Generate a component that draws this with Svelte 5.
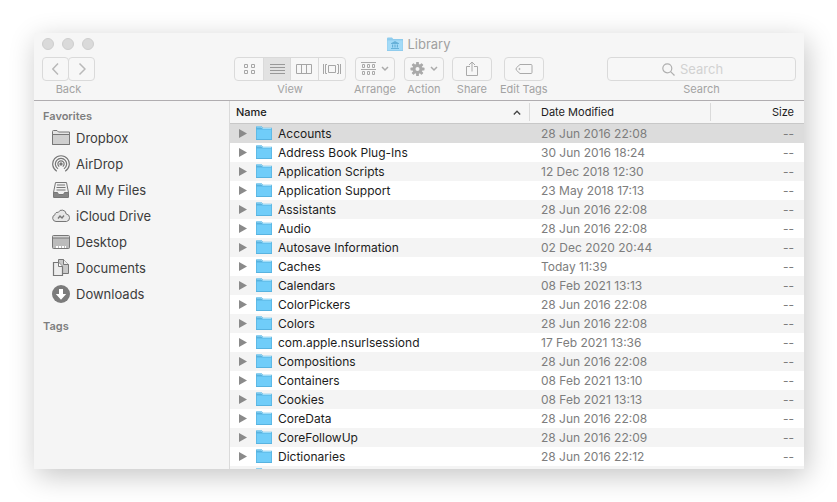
<script>
  const favorites = [
    { label: 'Dropbox', icon: 'folder' },
    { label: 'AirDrop', icon: 'airdrop' },
    { label: 'All My Files', icon: 'files' },
    { label: 'iCloud Drive', icon: 'cloud' },
    { label: 'Desktop', icon: 'desktop' },
    { label: 'Documents', icon: 'documents' },
    { label: 'Downloads', icon: 'downloads' },
  ];

  const rows = [
    ['Accounts', '28 Jun 2016 22:08'],
    ['Address Book Plug-Ins', '30 Jun 2016 18:24'],
    ['Application Scripts', '12 Dec 2018 12:30'],
    ['Application Support', '23 May 2018 17:13'],
    ['Assistants', '28 Jun 2016 22:08'],
    ['Audio', '28 Jun 2016 22:08'],
    ['Autosave Information', '02 Dec 2020 20:44'],
    ['Caches', 'Today 11:39'],
    ['Calendars', '08 Feb 2021 13:13'],
    ['ColorPickers', '28 Jun 2016 22:08'],
    ['Colors', '28 Jun 2016 22:08'],
    ['com.apple.nsurlsessiond', '17 Feb 2021 13:36'],
    ['Compositions', '28 Jun 2016 22:08'],
    ['Containers', '08 Feb 2021 13:10'],
    ['Cookies', '08 Feb 2021 13:13'],
    ['CoreData', '28 Jun 2016 22:08'],
    ['CoreFollowUp', '28 Jun 2016 22:09'],
    ['Dictionaries', '28 Jun 2016 22:12'],
    ['', ''],
  ];

  const views = ['icons', 'list', 'columns', 'cover'];
  const viewNames = { icons: 'Icon view', list: 'List view', columns: 'Column view', cover: 'Cover Flow view' };

  let view = $state('list');
  let selected = $state(0);
</script>

{#snippet chevron()}
  <svg width="8" height="6" viewBox="0 0 8 6" fill="none" stroke="#ababab" stroke-width="1.5"><path d="M1 1l3 3 3-3" /></svg>
{/snippet}

<div class="desktop">
  <div class="window">
    <header>
      <div class="titlebar">
        <div class="lights">
          <button aria-label="Close"></button>
          <button aria-label="Minimize"></button>
          <button aria-label="Zoom"></button>
        </div>
        <div class="title">
          <svg width="16" height="14" viewBox="0 0 16 14">
            <path d="M0 1.500Q0 .5 1 .5h4l1.300 1.500H16V14H0z" fill="#90cdee" />
            <path d="M0 3h16v10.500H0z" fill="#a3dbf8" stroke="#8cc9e9" stroke-width=".7" />
            <path d="M8 4l4 2.200v.8H4v-.8zM5 7.500h1.200v3H5zM7.400 7.500h1.200v3H7.400zM9.800 7.500H11v3H9.800zM4 11h8v1H4z" fill="#66b1d9" />
          </svg>
          <span>Library</span>
        </div>
      </div>

      <div class="toolbar">
        <div class="tool nav">
          <div class="pair">
            <button aria-label="Back">
              <svg width="8" height="14" viewBox="0 0 8 14" fill="none" stroke="#b9b9b9" stroke-width="1.500"><path d="M6 1.500L.8 7 6 12.500" /></svg>
            </button>
            <button aria-label="Forward">
              <svg width="8" height="14" viewBox="0 0 8 14" fill="none" stroke="#b9b9b9" stroke-width="1.500"><path d="M1.500 1.500L7 7 1.500 12.500" /></svg>
            </button>
          </div>
          <span>Back</span>
        </div>

        <div class="tool">
          <div class="segments">
            {#each views as v}
              <button aria-label={viewNames[v]} aria-pressed={view === v} class:on={view === v} onclick={() => (view = v)}>
                <svg width="18" height="12" viewBox="0 0 18 12" fill="none" stroke="#a6a6a6" stroke-width="1">
                  {#if v === 'icons'}
                    <path d="M4.500 1.500h3v3h-3zM11.500 1.500h3v3h-3zM4.500 7.500h3v3h-3zM11.500 7.500h3v3h-3z" />
                  {:else if v === 'list'}
                    <path d="M2 1.500h15M2 4.500h15M2 7.500h15M2 10.500h15" stroke="#999" />
                  {:else if v === 'columns'}
                    <path d="M1.500 1.500h15v9h-15zM6.500 1.500v9M11.500 1.500v9" />
                  {:else}
                    <path d="M5.500 2.500h7v7h-7zM.5 1v10M17.500 1v10M4 1.500H2.500v9H4M14 1.500h1.500v9H14" />
                  {/if}
                </svg>
              </button>
            {/each}
          </div>
          <span>View</span>
        </div>

        <div class="tool">
          <button class="box" aria-label="Arrange">
            <svg width="15" height="14" viewBox="0 0 15 14" fill="none" stroke="#aaa">
              <path d="M0 .5h15M0 7.500h15M1.500 2.500h2v3h-2zM6.500 2.500h2v3h-2zM11.500 2.500h2v3h-2zM1.500 9.500h2v3h-2zM6.500 9.500h2v3h-2zM11.500 9.500h2v3h-2z" />
            </svg>
            {@render chevron()}
          </button>
          <span>Arrange</span>
        </div>

        <div class="tool">
          <button class="box" aria-label="Action">
            <svg width="15" height="14" viewBox="-7.500 -7 15 14">
              {#each [0, 45, 90, 135] as a}
                <rect x="-1.400" y="-7" width="2.800" height="14" rx=".6" fill="#aaa" transform="rotate({a})" />
              {/each}
              <circle r="5" fill="#aaa" />
              <circle r="2" fill="#f6f6f6" />
            </svg>
            {@render chevron()}
          </button>
          <span>Action</span>
        </div>

        <div class="tool">
          <button class="box" aria-label="Share">
            <svg width="12" height="16" viewBox="0 0 12 16" fill="none" stroke="#aaa">
              <path d="M4 5.500H.5v9h11v-9H8M6 10.500V1M3 4l3-3 3 3" />
            </svg>
          </button>
          <span>Share</span>
        </div>

        <div class="tool">
          <button class="box" aria-label="Edit Tags">
            <svg width="18" height="12" viewBox="0 0 18 12" fill="none" stroke="#aaa">
              <path d="M5 1.500h11q1 0 1 1v7q0 1-1 1H5L1.500 7.300Q.5 6 1.500 4.700z" /><circle cx="4.500" cy="6" r=".6" />
            </svg>
          </button>
          <span>Edit Tags</span>
        </div>

        <div class="tool search">
          <div class="field">
            <svg width="13" height="13" viewBox="0 0 13 13" fill="none" stroke="#b0b0b0" stroke-width="1.200"><circle cx="5.300" cy="5.300" r="4.500" /><path d="M8.600 8.600L12.500 12.500" /></svg>
            <input id="search" type="text" placeholder="Search" />
          </div>
          <label for="search">Search</label>
        </div>
      </div>
    </header>

    <div class="body">
      <nav>
        <h2>Favorites</h2>
        <ul>
          {#each favorites as f}
            <li>
              <a href="#{f.icon}">
                <svg width="18" height="18" viewBox="0 0 18 18" fill="none" stroke="#777" stroke-width="1">
                  {#if f.icon === 'folder'}
                    <path d="M.5 15.500v-13q0-1 1-1h3.500l1.500 1.500h11v12.500z" fill="#e4e4e4" />
                    <path d="M.5 5.500h17v10H.5z" fill="#cfcfcf" />
                  {:else if f.icon === 'airdrop'}
                    <circle cx="9" cy="9" r="1.200" fill="#777" />
                    <path d="M7.300 11.500a3.100 3.100 0 1 1 3.400 0M6 13.700a5.600 5.600 0 1 1 6 0M4.800 16.200a8.300 8.300 0 1 1 8.400 0" stroke-width="1.200" />
                  {:else if f.icon === 'files'}
                    <path d="M3.500 1.500h11l2 10v4.500h-15v-4.500z" fill="#f0f0f0" />
                    <path d="M5 4h8M4.500 6.500h9M4.500 9h9" />
                    <path d="M1.500 11.500h4l1 2h5l1-2h4V16q0 .5-.5.5H2q-.5 0-.5-.5z" fill="#858585" />
                  {:else if f.icon === 'cloud'}
                    <path d="M4 14.500a3.500 3.500 0 0 1-1-6.800 2.300 2.300 0 0 1 3.200-2.200 4.200 4.200 0 0 1 8 1.500 3.800 3.800 0 0 1 .3 7.500z" fill="#e6e6e6" />
                    <path d="M6 11.500l2-2.500 2 2 2-2.500" stroke-width="1.300" />
                  {:else if f.icon === 'desktop'}
                    <rect x=".5" y="2.500" width="17" height="13" rx="1" fill="#bcbcbc" />
                    <path d="M1 4h16" stroke="#eee" /><path d="M1 5h16" />
                    <path d="M4 13h2v2H4zM7 13h2v2H7zM10 13h2v2h-2zM13 13h1v2h-1z" fill="#fff" stroke="none" />
                  {:else if f.icon === 'documents'}
                    <path d="M6.500.500h5l5 5v9h-10z" fill="#c9c9c9" /><path d="M11.500.500v5h5" fill="#eee" />
                    <path d="M1.500 3.500h5l4 4v9h-9z" fill="#ededed" stroke-width="1.200" /><path d="M6.500 3.500v4h4" fill="#fff" />
                  {:else}
                    <circle cx="9" cy="9" r="9" fill="#7b7b7b" stroke="none" />
                    <path d="M7 4h4v5h3.200L9 14.700 3.800 9H7z" fill="#fff" stroke="none" />
                  {/if}
                </svg>
                {f.label}
              </a>
            </li>
          {/each}
        </ul>
        <h2>Tags</h2>
      </nav>

      <main>
        <table>
          <thead>
            <tr>
              <th class="name" aria-sort="ascending">
                <div>Name
                  <svg width="8" height="5" viewBox="0 0 8 5" fill="none" stroke="#444" stroke-width="1.300"><path d="M.8 4.500L4 1.200l3.200 3.300" /></svg>
                </div>
              </th>
              <th class="date"><div>Date Modified</div></th>
              <th class="size"><div>Size</div></th>
            </tr>
          </thead>
          <tbody>
            {#each rows as [name, date], i}
              <tr class:selected={selected === i} onclick={() => (selected = i)}>
                <td class="name">
                  <div>
                    <button class="disclose" aria-label="Expand {name}">
                      <svg width="8" height="9" viewBox="0 0 8 9"><path d="M0 0l8 4.500L0 9z" fill="#8a8a8a" /></svg>
                    </button>
                    <svg width="16" height="15" viewBox="0 0 16 15">
                      <path d="M0 14V1Q0 .2.800.200h4.700L7 1.700h9V14z" fill="#58b3e0" />
                      <path d="M.7 1h4.500l1.500 1.500H15.300" fill="none" stroke="#9fdcf8" />
                      <path d="M.7 3.500h14.600V13H.7z" fill="#70cdf9" />
                    </svg>
                    <span>{name}</span>
                  </div>
                </td>
                <td class="date">{date}</td>
                <td class="size">{name ? '--' : ''}</td>
              </tr>
            {/each}
          </tbody>
        </table>
      </main>
    </div>
  </div>
</div>

<style>
  :global(body) { background: #fff; }
  .desktop {
    box-sizing: border-box;
    height: 100vh;
    padding: 33px 33px 33px 34px;
    font-family: Inter, "Liberation Sans", sans-serif;
    font-size: 12px;
    overflow: hidden;
  }
  button { font: inherit; padding: 0; border: 0; background: none; }
  svg { display: block; flex: none; }
  .window {
    height: 100%;
    display: flex;
    flex-direction: column;
    overflow: hidden;
    background: #f5f5f5;
    border-radius: 4px 0 0 0;
    box-shadow: 3px 7px 28px rgba(0, 0, 0, .23);
  }
  header { border-bottom: 1px solid #b0adb0; background: #f6f6f6; }
  .titlebar { display: grid; grid-template-columns: 1fr auto 1fr; height: 22px; padding: 0 8px 2px; align-items: center; }
  .lights { display: flex; gap: 8px; }
  .lights button { box-sizing: border-box; width: 12px; height: 12px; border-radius: 50%; background: #dadada; border: 1px solid #cecece; }
  .title { display: flex; align-items: center; gap: 4px; font-size: 13px; line-height: 16px; color: #a0a0a0; }
  .toolbar { display: flex; gap: 8px; padding: 0 8px; height: 43px; }
  .tool { display: flex; flex-direction: column; align-items: center; font-size: 11px; line-height: 16px; color: #a3a3a3; white-space: nowrap; }
  .nav { margin-right: 131px; }
  .pair { display: flex; }
  .pair button, .box, .segments, .field { box-sizing: border-box; height: 24px; border: 1px solid #dadada; border-radius: 4px; background: #f7f7f7; }
  .pair button { width: 27px; display: grid; place-items: center; }
  .pair button + button { margin-left: -1px; }
  .segments { display: flex; width: 112px; overflow: hidden; }
  .segments button { flex: 1; display: grid; place-items: center; border-left: 1px solid #dadada; }
  .segments button:first-child { border-left-color: transparent; }
  .segments .on { background: #e2e2e2; }
  .box { width: 40px; display: flex; align-items: center; justify-content: center; gap: 5px; }
  .search { margin-left: auto; width: 189px; }
  .field { display: flex; align-items: center; gap: 5px; width: 100%; padding-left: 54px; }
  .field input { flex: 1; min-width: 0; border: 0; padding: 0; background: none; outline: none; font: inherit; font-size: 13px; color: #555; }
  .field input::placeholder { color: #d2d2d2; opacity: 1; }

  .body { flex: 1; min-height: 0; display: flex; }
  nav { box-sizing: border-box; flex: none; width: 196px; padding: 7px 8px; border-right: 1px solid #dadada; }
  h2 { margin: 0; padding-left: 1px; font-size: 11px; line-height: 16px; font-weight: 600; color: #7e7e7e; }
  ul { list-style: none; margin: 1px 0 11px; padding: 0; }
  li a { display: flex; align-items: center; gap: 6px; height: 26px; padding-left: 10px; font-size: 13px; color: #3c3c3c; text-decoration: none; }
  main { flex: 1; min-width: 0; overflow: hidden; background: #fff; }
  table { width: 100%; table-layout: fixed; border-collapse: collapse; color: #1c1c1c; }
  th, td { padding: 0; text-align: left; font-weight: 400; white-space: nowrap; }
  th { height: 22px; background: #f6f6f6; border-bottom: 1px solid #c8c8c8; font-size: 11px; }
  th div { display: flex; align-items: center; justify-content: space-between; height: 18px; }
  th.name { font-weight: 500; }
  th.name div { padding: 0 8px 0 6px; }
  th.date div { padding-left: 11px; border-left: 1px solid #dadada; }
  th.size div { justify-content: flex-end; padding-right: 10px; border-left: 1px solid #dadada; }
  .date { width: 181px; }
  .size { width: 94px; }
  td { height: 19px; line-height: 19px; }
  tbody tr:nth-child(odd) { background: #f4f4f4; }
  tbody tr.selected { background: #dcdcdc; }
  td.name div { display: flex; align-items: center; height: 19px; padding-left: 9px; }
  .disclose { margin-right: 9px; }
  td.name span { margin-left: 6px; }
  td.date { box-sizing: border-box; padding-left: 12px; color: #7d7d7d; }
  td.size { box-sizing: border-box; padding-right: 10px; text-align: right; color: #7d7d7d; }
</style>
